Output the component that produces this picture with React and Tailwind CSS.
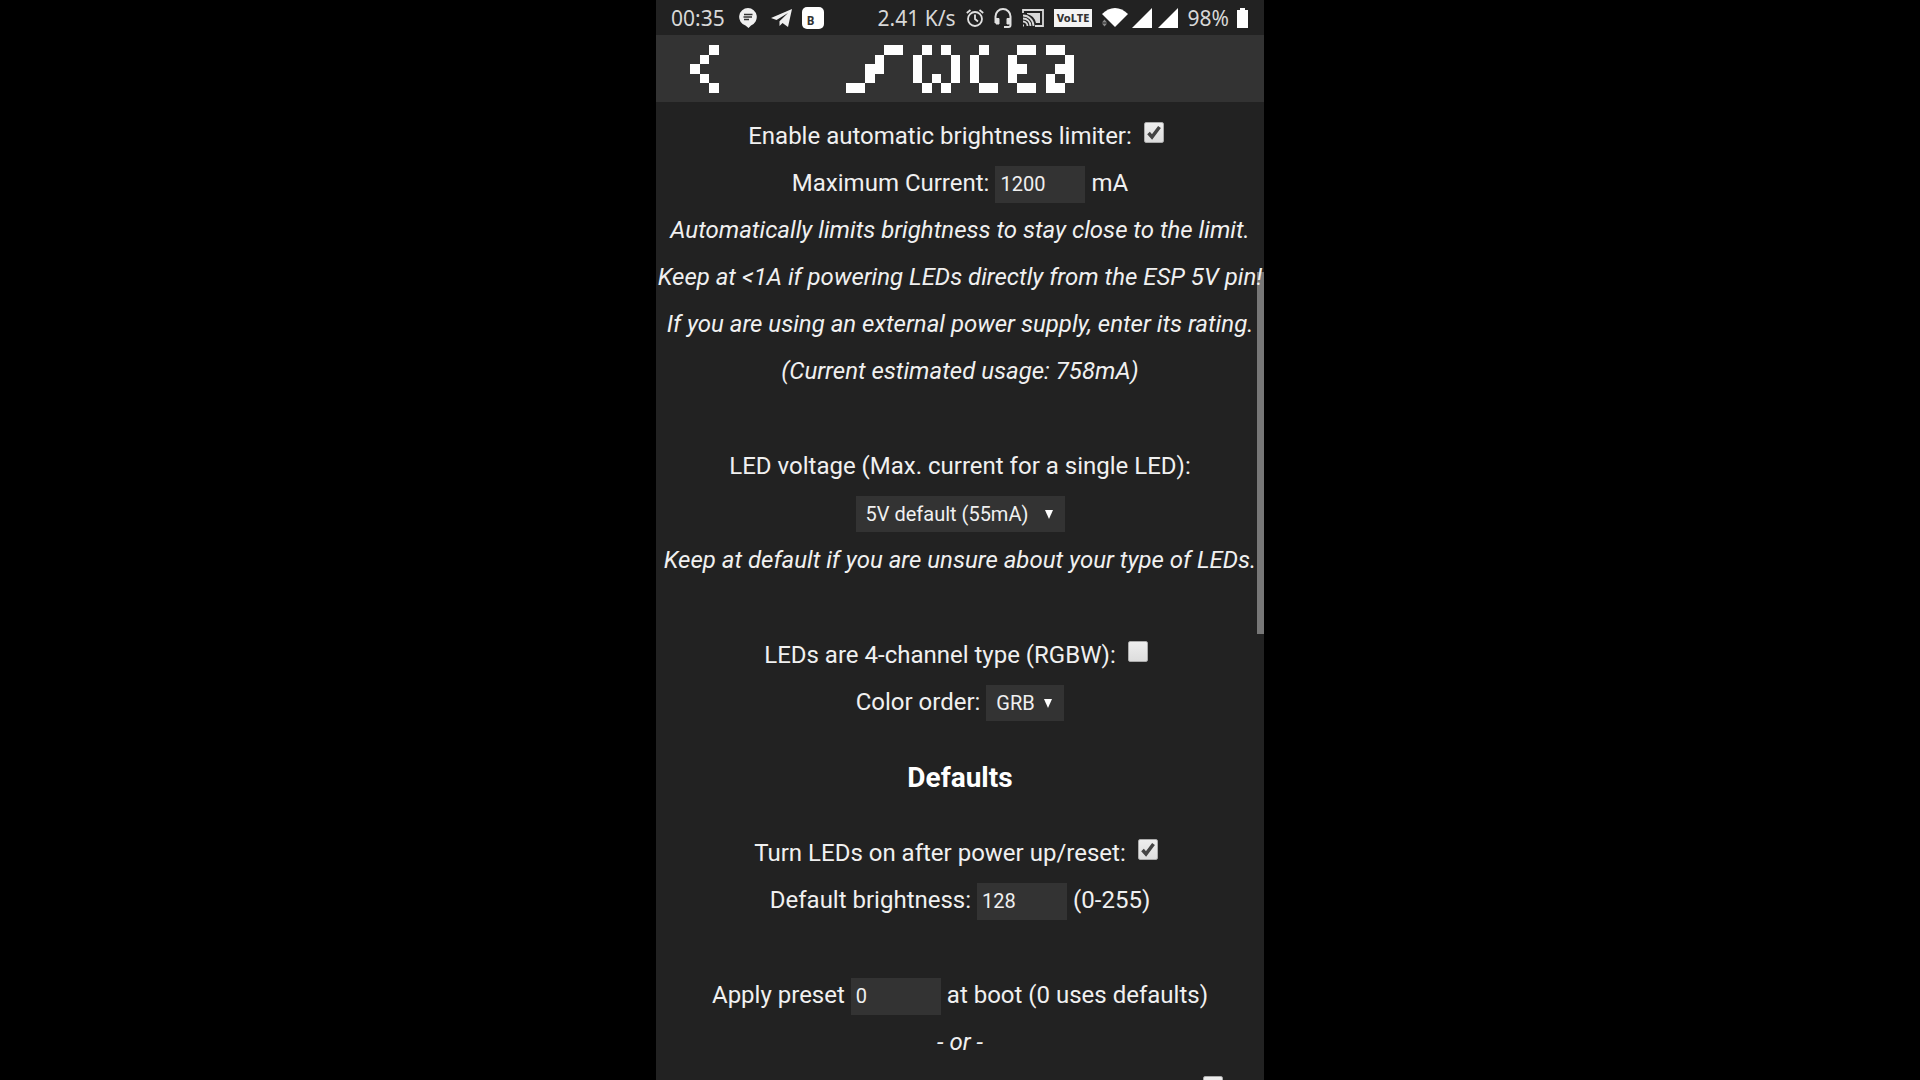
import { useState } from 'react';

const LOGO = [
  '....##..#.#...#...##.##.',
  '...#...#...#.#...#.....#',
  '..##...#...#.#...##...##',
  '..#....#.#.#.#...#...#.#',
  '##......#.#...##..##.##.',
];
const BACK = ['..#', '.#.', '#..', '.#.', '..#'];

const PixelArt = ({ rows, className }) => (
  <svg viewBox={`0 0 ${rows[0].length} 5`} preserveAspectRatio="none" shapeRendering="crispEdges" fill="#fff" className={className}>
    {rows.flatMap((row, y) => [...row].map((c, x) => (c === '#' ? <rect key={`${x}-${y}`} x={x} y={y} width="1" height="1" /> : null)))}
  </svg>
);

const StatusBar = () => (
  <div className="flex h-[35px] shrink-0 items-center justify-between pl-[15px] pr-4 font-['Noto_Sans','Open_Sans',sans-serif] text-[21px] text-[#d8d8d8]">
    <div className="flex items-center">
      <span className="mr-3.5">00:35</span>
      <svg viewBox="0 0 18 20" className="mr-3.5 h-5 w-[18px]">
        <path d="M9 0a9 9 0 0 1 3 17.4L9.5 20 6.500 17.600A9 9 0 0 1 9 0z" fill="#f0f0f0" />
        <path d="M5 6.500h8.500M4.500 9h8.500M5 11.500h5" stroke="#333" strokeWidth="1.400" />
      </svg>
      <svg viewBox="0 0 21 18" className="mr-2.5 h-[18px] w-[21px]" fill="#f0f0f0">
        <path d="M21 0 0 9l5.500 2L17 4 8.500 12.200V17l3-3 5.500 4z" />
      </svg>
      <svg viewBox="0 0 22 22" className="h-[22px] w-[22px]">
        <rect width="22" height="22" rx="5" fill="#fff" />
        <text x="8.500" y="17.500" textAnchor="middle" fontSize="11.500" fontWeight="700" fill="#333">B</text>
      </svg>
    </div>
    <div className="flex items-center">
      <span className="mr-2.5">2.41 K/s</span>
      <svg viewBox="0 0 18 18" className="mr-2.5 h-[18px] w-[18px]" fill="none" stroke="#e0e0e0" strokeWidth="1.800">
        <circle cx="9" cy="10" r="7" />
        <path d="M9 5.500V10l3 2.500M.8 4 4.500 1M17.200 4 13.500 1" />
      </svg>
      <svg viewBox="0 0 18 20" className="mr-2.5 h-5 w-[18px]" fill="none" stroke="#e0e0e0" strokeWidth="2">
        <path d="M1.500 15V8.500a7.500 7.500 0 0 1 15 0V17q0 2-2 2H10" />
        <path d="M2 10.500h3V16H2zM13 10.500h3V16h-3z" fill="#e0e0e0" strokeWidth="1" />
      </svg>
      <svg viewBox="0 0 22 18" className="mr-2.5 h-[18px] w-[22px]" fill="none" stroke="#d8d8d8" strokeWidth="1.800">
        <path d="M1 4V1h20v16h-8M1 16.500h1M1 12.500a4.500 4.500 0 0 1 4.500 4.500M1 9.500a7.500 7.500 0 0 1 7.500 7.500M1 6.500a10.500 10.500 0 0 1 10.500 10.500" />
        <path d="M5 4h13v10h-4A12 12 0 0 0 5 5z" fill="#d8d8d8" stroke="none" />
      </svg>
      <svg viewBox="0 0 38 18" className="mr-2.5 h-[18px] w-[38px]">
        <rect width="38" height="18" fill="#f4f4f4" />
        <text x="19" y="13" textAnchor="middle" fontSize="11" fontWeight="800" fill="#333">VoLTE</text>
      </svg>
      <svg viewBox="0 0 26 19" className="h-[19px] w-[26px]" fill="#fff">
        <path d="M0 6q6-6 13-6t13 6L13 19z" />
        <path d="M0 14.500 2.500 11.500 5 14.500zM0 15.500h5L2.500 18.500z" fill="#888" />
      </svg>
      <svg viewBox="0 0 20 20" className="ml-1 h-5 w-5" fill="#fff"><path d="M20 0v20H0z" /></svg>
      <svg viewBox="0 0 20 20" className="ml-1.5 h-5 w-5" fill="#fff"><path d="M20 0v20H0z" /></svg>
      <span className="ml-2.5 mr-2">98%</span>
      <svg viewBox="0 0 11 20" className="h-5 w-[11px]" fill="#fff"><path d="M3 0h5v2h3v18H0V2h3z" /></svg>
    </div>
  </div>
);

const Row = ({ children, tall }) => (
  <div className={`flex items-center justify-center whitespace-nowrap ${tall ? 'h-12' : 'h-[47px]'}`}>{children}</div>
);

const Note = ({ children }) => <p className="h-[47px] whitespace-nowrap italic leading-[47px]">{children}</p>;

const CheckRow = ({ id, label, initial }) => {
  const [checked, setChecked] = useState(initial);
  return (
    <Row>
      <label htmlFor={id}>{label}</label>
      <span className="relative mb-1.5 ml-3 mr-2 h-[21px] w-5">
        <input id={id} type="checkbox" checked={checked} onChange={(e) => setChecked(e.target.checked)} className="block h-full w-full appearance-none rounded-xs border border-[#aaa] bg-linear-to-b from-[#eee] to-[#ddd]" />
        {checked && (
          <svg viewBox="0 0 20 21" className="pointer-events-none absolute inset-0 h-full w-full" fill="none" stroke="#444" strokeWidth="3.500">
            <path d="M4.500 11l3.500 4L15.500 5" />
          </svg>
        )}
      </span>
    </Row>
  );
};

const NumberRow = ({ id, before, after, initial }) => (
  <Row tall>
    <label htmlFor={id}>{before}</label>
    <input id={id} type="text" inputMode="numeric" defaultValue={initial} className="mx-1.5 mt-0.5 h-[37px] w-[90px] bg-[#333] px-[5px] text-xl" />
    <span>{after}</span>
  </Row>
);

const Select = ({ id, options, className }) => (
  <span className="relative mt-0.5">
    <select id={id} className={`block h-9 appearance-none bg-[#333] pl-2.5 text-xl ${className}`}>
      {options.map((o) => <option key={o}>{o}</option>)}
    </select>
    <svg viewBox="0 0 8 9" className="pointer-events-none absolute right-3 top-3.5 h-[9px] w-2" fill="#fff"><path d="M0 0h8L4 9z" /></svg>
  </span>
);

const App = () => (
  <div className="h-screen overflow-hidden bg-black">
    <div className="relative mx-auto flex h-full max-w-[608px] flex-col overflow-hidden bg-[#222] font-[Roboto,sans-serif] text-2xl text-[#f0f0f0]">
      <StatusBar />
      <header className="relative flex h-[67px] shrink-0 items-center justify-center bg-[#333]">
        <button aria-label="Back" className="absolute left-[34px]"><PixelArt rows={BACK} className="h-12 w-[29px]" /></button>
        <PixelArt rows={LOGO} className="h-12 w-[228px]" />
      </header>
      <main className="relative z-10 pt-2.5 text-center">
        <CheckRow id="abl" label="Enable automatic brightness limiter:" initial />
        <NumberRow id="ma" before="Maximum Current:" after="mA" initial="1200" />
        <Note>Automatically limits brightness to stay close to the limit.</Note>
        <Note>Keep at &lt;1A if powering LEDs directly from the ESP 5V pin!</Note>
        <Note>If you are using an external power supply, enter its rating.</Note>
        <Note>(Current estimated usage: 758mA)</Note>
        <div className="mt-[47px]">
          <Row><label htmlFor="volt">LED voltage (Max. current for a single LED):</label></Row>
          <Row tall><Select id="volt" className="w-[209px]" options={['5V default (55mA)', '12V (30mA)']} /></Row>
          <Note>Keep at default if you are unsure about your type of LEDs.</Note>
        </div>
        <div className="mt-[47px]">
          <CheckRow id="rgbw" label="LEDs are 4-channel type (RGBW):" initial={false} />
          <Row tall>
            <label htmlFor="order" className="mr-1.5">Color order:</label>
            <Select id="order" className="w-[78px]" options={['GRB', 'RGB', 'BRG']} />
          </Row>
        </div>
        <h3 className="my-6 h-[55px] text-[28px] font-bold leading-[55px] text-white">Defaults</h3>
        <CheckRow id="on" label="Turn LEDs on after power up/reset:" initial />
        <NumberRow id="bri" before="Default brightness:" after="(0-255)" initial="128" />
        <div className="mt-[47px]">
          <NumberRow id="preset" before="Apply preset" after="at boot (0 uses defaults)" initial="0" />
          <Note>- or -</Note>
          <CheckRow id="cycle" label="Set current preset cycle setting as boot default:" initial={false} />
        </div>
      </main>
      <div className="absolute right-0 top-[272px] h-[362px] w-[7px] bg-[#777]" />
    </div>
  </div>
);

export default App;
